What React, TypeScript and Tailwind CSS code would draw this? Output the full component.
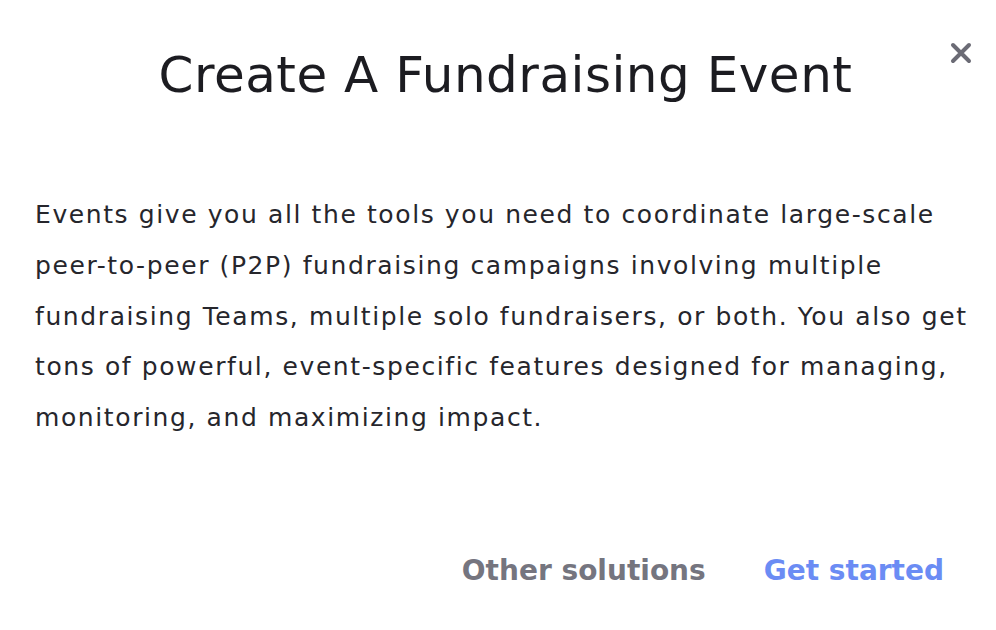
export default function App() {
    return (
        <div
            className="w-[996px] h-[630px] bg-white relative text-[#1f1f24]"
            style={{ fontFamily: '"DejaVu Sans", "Noto Sans", sans-serif' }}
        >
            {/* CLOSE */}
            <button className="absolute right-[24px] top-[42px] text-[#6b6b75]">
                <svg width="22" height="22" viewBox="0 0 22 22" fill="none" stroke="currentColor" strokeWidth="4" strokeLinecap="round">
                    <path d="M3 3L19 19M19 3L3 19" />
                </svg>
            </button>

            {/* TITLE */}
            <div className="pt-[40px] flex justify-center">
                <h1 className="text-[50px] leading-[70px] font-normal tracking-[0.5px] text-[#1c1c21] ml-[15px]">
                    Create A Fundraising Event
                </h1>
            </div>

            {/* BODY */}
            <div className="mt-[80px] px-[35px]">
                <p className="text-[25px] leading-[50.8px] tracking-[1.6px] whitespace-nowrap text-[#26262c]">
                    Events give you all the tools you need to coordinate large-scale
                    <br />
                    peer-to-peer (P2P) fundraising campaigns involving multiple
                    <br />
                    fundraising Teams, multiple solo fundraisers, or both. You also get
                    <br />
                    tons of powerful, event-specific features designed for managing,
                    <br />
                    monitoring, and maximizing impact.
                </p>
            </div>

            {/* BUTTONS */}
            <div className="mt-[106px] pr-[52px] flex justify-end items-center gap-[58px]">
                <button className="text-[28px] font-semibold text-[#75757f]">
                    Other solutions
                </button>
                <button className="text-[28px] font-semibold text-[#6b8cf4]">
                    Get started
                </button>
            </div>
        </div>
    );
}
